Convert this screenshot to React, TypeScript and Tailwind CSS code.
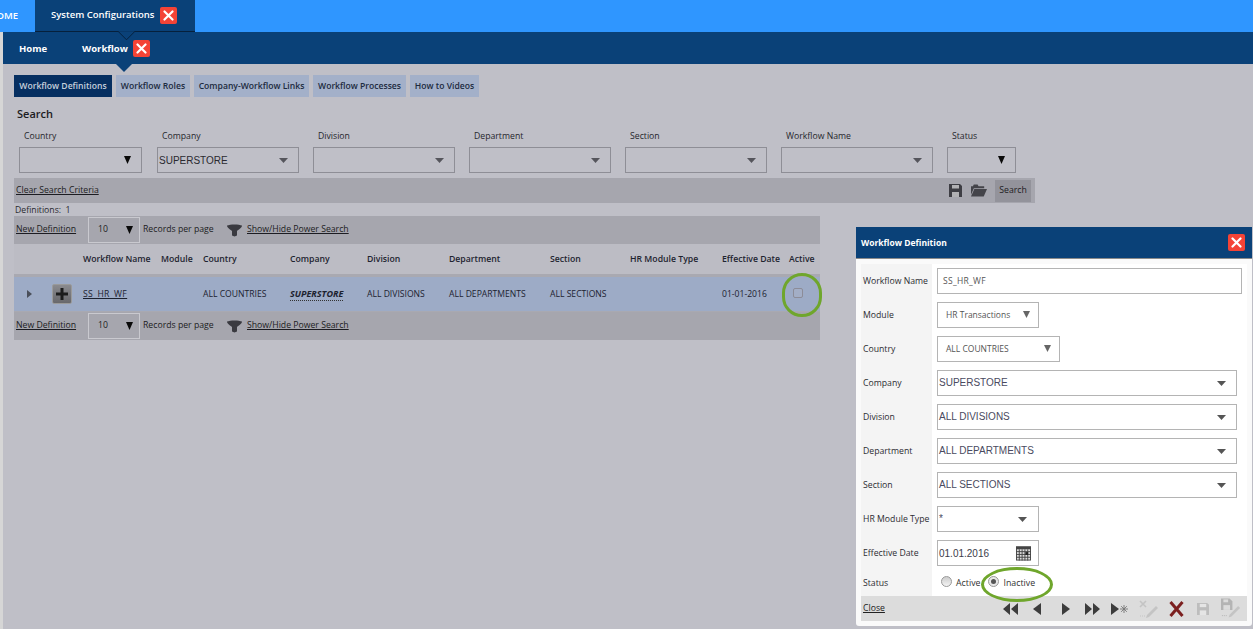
import React from "react";

const font = { fontFamily: '"Open Sans", "DejaVu Sans", sans-serif' };

function CloseX({ className = "" }: { className?: string }) {
  return (
    <span className={"inline-flex w-[17px] h-[17px] bg-[#f44336] rounded-[2px] items-center justify-center " + className}>
      <svg width="11" height="11" viewBox="0 0 11 11"><path d="M1.5 1.5 9.5 9.5M9.5 1.5 1.5 9.5" stroke="#fff" strokeWidth="2.2" strokeLinecap="round" /></svg>
    </span>
  );
}

function Caret({ color = "#55555c", w = 9, h = 5 }: { color?: string; w?: number; h?: number }) {
  return (
    <svg width={w} height={h} viewBox="0 0 11 6" preserveAspectRatio="none"><path d="M0 0H11L5.5 6Z" fill={color} /></svg>
  );
}

function BlackCaret() {
  return <svg width="7" height="8" viewBox="0 0 9 9" preserveAspectRatio="none"><path d="M0 0H9L4.5 9Z" fill="#0a0a0a" /></svg>;
}

function FilterSelect({ w, value, black }: { w: string; value?: string; black?: boolean }) {
  return (
    <div className={"h-[26px] border border-[#8e8e96] flex items-center justify-between pl-[1px] pr-[10px] text-[10px] text-[#2a2a30] " + w} style={{ fontFamily: '"Liberation Sans", sans-serif' }}>
      <span>{value}</span>
      {black ? <BlackCaret /> : <Caret />}
    </div>
  );
}

function Funnel() {
  return (
    <svg width="15" height="13" viewBox="0 0 15 13"><path d="M0 1.5C3 0 12 0 15 1.5C15 4 11 6 10 7V11.5L7.5 12.5L5 11.5V7C4 6 0 4 0 1.5Z" fill="#3a3a40" /></svg>
  );
}

function Pager() {
  return (
    <div className="h-[28px] bg-[#a6a6ae] flex items-center text-[8.7px] text-[#1c1c22]">
      <span className="ml-[2px] underline w-[72px]">New Definition</span>
      <div className="w-[52px] h-[26px] border border-[#c9c9cf] flex items-center justify-between pl-[9px] pr-[6px]">
        <span>10</span>
        <BlackCaret />
      </div>
      <span className="ml-[3px] w-[84px]">Records per page</span>
      <Funnel />
      <span className="ml-[5px] underline">Show/Hide Power Search</span>
    </div>
  );
}

const cols = "grid grid-cols-[69px_78px_42px_87px_77px_82px_101px_80px_92px_67px_31px] items-center";

function Filter({ label, w, ml, value, black }: { label: string; w: string; ml: string; value?: string; black?: boolean }) {
  return (
    <div className={"flex flex-col " + ml}>
      <span className="text-[8.7px] h-[22px] leading-[22px] text-[#26262c] ml-[5px]">{label}</span>
      <FilterSelect w={w} value={value} black={black} />
    </div>
  );
}

function Label({ children }: { children: React.ReactNode }) {
  return <div className="h-[34px] flex items-center pl-[2px] pt-[2px] text-[8.7px] text-[#2c2c32] whitespace-nowrap">{children}</div>;
}

function Row({ children }: { children: React.ReactNode }) {
  return <div className="h-[34px] flex items-center">{children}</div>;
}

function MSelect({ w, value, small, pr = "pr-[10px]", boxPl = "pl-[1px]" }: { w: string; value: string; small?: boolean; pr?: string; boxPl?: string }) {
  return (
    <div
      className={"h-[26px] border border-[#b4b4b4] flex items-center justify-between " + boxPl + " " + pr + " " + w + (small ? " text-[8.5px] text-[#555]" : " text-[10px] text-[#4a4a60]")}
      style={small ? undefined : { fontFamily: '"Liberation Sans", sans-serif' }}
    >
      <span className={small ? "mt-[1px]" : "-mt-[2px]"}>{value}</span>
      {small ? <svg className="-mt-[2px]" width="7" height="7" viewBox="0 0 7 8" preserveAspectRatio="none"><path d="M0 0H7L3.5 8Z" fill="#666" /></svg> : <Caret color="#555" />}
    </div>
  );
}

function Calendar() {
  return (
    <svg width="15" height="15" viewBox="0 0 16 15">
      <rect x=".5" y=".5" width="15" height="14" fill="#ddd" stroke="#444" />
      <rect x="0" y="0" width="16" height="3" fill="#444" />
      {[3.5, 6.5, 9.5, 12.5].map((x) => <path key={x} d={`M${x} 3V15`} stroke="#444" />)}
      {[5.5, 8.5, 11.5].map((y) => <path key={y} d={`M0 ${y}H16`} stroke="#444" />)}
      <rect x="10" y="6" width="3" height="3" fill="#222" />
    </svg>
  );
}

function Save({ c = "#444", s = 13 }: { c?: string; s?: number }) {
  return (
    <svg width={s} height={s} viewBox="0 0 13 13">
      <path d="M0 0H11L13 2V13H0Z" fill={c} />
      <rect x="3" y="1" width="7" height="3.5" fill="#fff" opacity=".6" />
      <rect x="3" y="8" width="7" height="5" fill="#fff" opacity=".6" />
    </svg>
  );
}

function Folder() {
  return (
    <svg width="16" height="13" viewBox="0 0 17 13">
      <path d="M0 2H2L3 0H7L8 2H14V4H3L0 11Z" fill="#44444a" />
      <path d="M3.5 5H17L13.5 13H0Z" fill="#44444a" />
    </svg>
  );
}

function Nav({ d, w = 16 }: { d: string; w?: number }) {
  return <svg width={w} height="12" viewBox={`0 0 ${w} 13`} preserveAspectRatio="none"><path d={d} fill="#3c3c3c" /></svg>;
}

export default function App() {
  return (
    <div className="relative w-[1253px] h-[629px] overflow-hidden bg-[#bfbfc7]" style={font}>
      <div className="h-[32px] bg-[#2f96ff] flex">
        <div className="w-[35px] flex items-center justify-end pr-[17px] text-white text-[9.5px] font-semibold overflow-hidden whitespace-nowrap"><span className="shrink-0">HOME</span></div>
        <div className="relative w-[160px] bg-[#0a4178] border-b border-[#06203c] flex items-center pl-[16px] text-white text-[9.5px] font-semibold">
          <span>System Configurations</span>
          <CloseX className="ml-[6px]" />
          <svg className="absolute left-[83px] top-[31px] z-10" width="17" height="9" viewBox="0 0 18 9"><path d="M0 0 9 9 18 0Z" fill="#0a4178" /><path d="M0 0 9 9 18 0" fill="none" stroke="#06203c" /></svg>
        </div>
      </div>

      <div className="flex h-[597px]">
        <div className="w-[3px] bg-[#d6d6d6] shrink-0" />
        <div className="flex-1 min-w-0">
          <div className="relative h-[32px] bg-[#0a4178] flex items-center text-white text-[9.5px] font-bold">
            <span className="ml-[16px] w-[63px] mt-[2px]">Home</span>
            <span className="mt-[2px]">Workflow</span>
            <CloseX className="ml-[5px]" />
            <svg className="absolute left-[113px] top-[32px]" width="16" height="8" viewBox="0 0 16 8"><path d="M0 0H16L8 8Z" fill="#0a4178" /></svg>
          </div>

          <div className="pl-[11px]">
            <div className="flex gap-[4px] mt-[11px] h-[22px] text-[8.6px] font-semibold text-[#1c2a40]">
              <div className="w-[98px] bg-[#062f61] text-[#c5cfdc] flex items-center justify-center">Workflow Definitions</div>
              <div className="w-[74px] bg-[#a3b0c9] flex items-center justify-center">Workflow Roles</div>
              <div className="w-[115px] bg-[#a3b0c9] flex items-center justify-center">Company-Workflow Links</div>
              <div className="w-[93px] bg-[#a3b0c9] flex items-center justify-center">Workflow Processes</div>
              <div className="w-[69px] bg-[#a3b0c9] flex items-center justify-center">How to Videos</div>
            </div>

            <div className="ml-[3px] mt-[9px] h-[16px] leading-[16px] text-[11px] font-semibold text-[#1c1c22]">Search</div>

            <div className="flex ml-[5px] mt-[3px]">
              <Filter label="Country" w="w-[123px]" ml="" black />
              <Filter label="Company" w="w-[142px]" ml="ml-[15px]" value="SUPERSTORE" />
              <Filter label="Division" w="w-[142px]" ml="ml-[14px]" />
              <Filter label="Department" w="w-[142px]" ml="ml-[14px]" />
              <Filter label="Section" w="w-[142px]" ml="ml-[14px]" />
              <Filter label="Workflow Name" w="w-[152px]" ml="ml-[14px]" />
              <Filter label="Status" w="w-[69px]" ml="ml-[14px]" black />
            </div>

            <div className="w-[1021px] h-[25px] mt-[5px] bg-[#a6a6ae] flex items-center text-[8.7px] text-[#1c1c22]">
              <span className="ml-[2px] underline">Clear Search Criteria</span>
              <div className="ml-auto flex items-center mr-[4px]">
                <Save c="#3e3e44" />
                <span className="ml-[9px] flex"><Folder /></span>
                <div className="ml-[8px] w-[36px] h-[22px] bg-[#93939b] flex items-center justify-center">Search</div>
              </div>
            </div>

            <div className="h-[13px] pt-[1px] leading-[13px] ml-[1px] text-[8.7px] text-[#2a2a30]">Definitions:&nbsp; 1</div>

            <div className="w-[806px]">
              <Pager />
              <div className={cols + " h-[30px] pt-[2px] bg-[#bcbcc4] text-[8.7px] font-semibold text-[#1e2430]"}>
                <span />
                <span>Workflow Name</span>
                <span>Module</span>
                <span>Country</span>
                <span>Company</span>
                <span>Division</span>
                <span>Department</span>
                <span>Section</span>
                <span>HR Module Type</span>
                <span>Effective Date</span>
                <span>Active</span>
              </div>
              <div className="h-[3px] bg-[#a9a9b1]" />
              <div className={cols + " h-[34px] bg-[#9dabc6] text-[8.6px] text-[#1c2230]"}>
                <div className="flex items-center">
                  <svg className="ml-[13px]" width="5" height="8" viewBox="0 0 5 8"><path d="M0 0 5 4 0 8Z" fill="#4a4f5a" /></svg>
                  <div className="ml-[20px] w-[20px] h-[20px] rounded-[2px] border border-[#9a9a9a] bg-gradient-to-b from-[#8a8a8e] to-[#68686c] flex items-center justify-center">
                    <svg width="12" height="12" viewBox="0 0 12 12"><path d="M4.5 0H7.5V4.5H12V7.5H7.5V12H4.5V7.5H0V4.5H4.5Z" fill="#1c1c1c" /></svg>
                  </div>
                </div>
                <span className="underline tracking-[0.4px]">SS_HR_WF</span>
                <span />
                <span>ALL COUNTRIES</span>
                <span className="font-bold italic text-[9px] border-b border-dotted border-[#333] justify-self-start">SUPERSTORE</span>
                <span>ALL DIVISIONS</span>
                <span>ALL DEPARTMENTS</span>
                <span>ALL SECTIONS</span>
                <span />
                <span>01-01-2016</span>
                <span className="ml-[4px] -mt-[2px] w-[10px] h-[10px] border border-[#8c8c98] rounded-[2px] bg-[#a3aec6]" />
              </div>
              <div className="h-px bg-[#a9a9b1]" />
              <Pager />
            </div>
          </div>
        </div>
      </div>

      <div className="absolute left-[782px] top-[273px] w-[40px] h-[44px] rounded-full border-[3px] border-[#6fa62c]" />

      <div className="absolute left-[856px] top-[227px] w-[396px] h-[399px] bg-[#fafafa] rounded-b-[3px] flex flex-col">
        <div className="h-[32px] bg-[#0a4178] border-b border-[#8a8a8a] flex items-center justify-between pl-[5px] pr-[7px] text-white text-[8.5px] font-bold">
          <span className="mt-[2px]">Workflow Definition</span>
          <CloseX />
        </div>
        <div className="flex-1 mx-[5px] mt-[5px] flex bg-white overflow-hidden">
          <div className="w-[71px] bg-[#f4f4f4] pt-[0px]">
            {["Workflow Name", "Module", "Country", "Company", "Division", "Department", "Section", "HR Module Type", "Effective Date"].map((l) => (
              <Label key={l}>{l}</Label>
            ))}
            <div className="h-[26px] flex items-center pl-[2px] pt-[2px] text-[8.7px] text-[#2c2c32]">Status</div>
          </div>
          <div className="flex-1 pl-[5px]">
            <Row>
              <div className="w-[305px] h-[26px] border border-[#b4b4b4] flex items-center pl-[5px] text-[8.5px] text-[#555] tracking-[0.3px]"><span className="mt-[1px]">SS_HR_WF</span></div>
            </Row>
            <Row><MSelect w="w-[102px]" value="HR Transactions" small boxPl="pl-[8px]" pr="pr-[8px]" /></Row>
            <Row><MSelect w="w-[123px]" value="ALL COUNTRIES" small boxPl="pl-[8px]" pr="pr-[8px]" /></Row>
            <Row><MSelect w="w-[300px]" value="SUPERSTORE" /></Row>
            <Row><MSelect w="w-[300px]" value="ALL DIVISIONS" /></Row>
            <Row><MSelect w="w-[300px]" value="ALL DEPARTMENTS" /></Row>
            <Row><MSelect w="w-[300px]" value="ALL SECTIONS" /></Row>
            <Row><MSelect w="w-[102px]" value="*" pr="pr-[11px]" /></Row>
            <Row>
              <div className="w-[102px] h-[26px] border border-[#b4b4b4] flex items-center justify-between pl-[1px] pr-[7px] text-[10px] text-[#3c3c4a]" style={{ fontFamily: '"Liberation Sans", sans-serif' }}>
                <span>01.01.2016</span>
                <Calendar />
              </div>
            </Row>
            <div className="h-[26px] flex items-center pl-[4px] text-[8.8px] text-[#333]">
              <span className="w-[11px] h-[11px] rounded-full border border-[#999] bg-gradient-to-b from-[#ccc] to-[#f4f4f4] -mt-[4px]" />
              <span className="ml-[4px] mt-[2px]">Active</span>
              <span className="ml-[8px] w-[11px] h-[11px] rounded-full border border-[#999] bg-[#e8e8e8] flex items-center justify-center -mt-[4px]">
                <span className="w-[5px] h-[5px] rounded-full bg-[#555]" />
              </span>
              <span className="ml-[4px] mt-[2px]">Inactive</span>
            </div>
          </div>
        </div>
        <div className="mx-[5px] mb-[5px] h-[25px] bg-[#dcdcdc] flex items-center pl-[2px] text-[8.7px] text-[#222]">
          <span className="w-[140px]"><span className="underline">Close</span></span>
          <div className="flex items-center">
            <Nav w={16} d="M7 0V13L0 6.5ZM15 0V13L8 6.5Z" />
            <span className="ml-[14px] flex"><Nav w={8} d="M8 0V13L0 6.5Z" /></span>
            <span className="ml-[21px] flex"><Nav w={8} d="M0 0V13L8 6.5Z" /></span>
            <span className="ml-[15px] flex"><Nav w={16} d="M0 0V13L7 6.5ZM8 0V13L15 6.5Z" /></span>
            <span className="ml-[10px] flex items-center">
              <Nav w={9} d="M0 0V13L8 6.5Z" />
              <svg width="8" height="8" viewBox="0 0 9 9"><path d="M4.5 0V9M0 4.5H9M1.3 1.3 7.7 7.7M7.7 1.3 1.3 7.7" stroke="#777" strokeWidth="1" /></svg>
            </span>
            <svg className="ml-[11px]" width="20" height="18" viewBox="0 0 20 18">
              <path d="M1 1 7 7M7 1 1 7" stroke="#c4c4c4" strokeWidth="1.6" />
              <path d="M8 15 17 6 19 8 10 17 7 18Z" fill="#c4c4c4" />
              <path d="M1 16H6" stroke="#c4c4c4" strokeDasharray="1 1" />
            </svg>
            <svg className="ml-[10px]" width="15" height="16" viewBox="0 0 15 16"><path d="M1.5 1 13.5 15M13.5 1 1.5 15" stroke="#7c2020" strokeWidth="3" /></svg>
            <span className="ml-[13px] flex"><Save c="#bdbdbd" s={12} /></span>
            <svg className="ml-[12px] -mt-[1px]" width="20" height="20" viewBox="0 0 21 20">
              <path d="M0 0H9L12 3V12H0Z" fill="#b4b4b4" />
              <rect x="2.5" y="1" width="5" height="3" fill="#dcdcdc" />
              <rect x="2.5" y="7" width="7" height="5" fill="#dcdcdc" />
              <path d="M9 17 18 8 20 10 11 19 8 20Z" fill="#c4c4c4" />
              <path d="M1 18H6" stroke="#b4b4b4" strokeDasharray="1 1" />
            </svg>
          </div>
        </div>
      </div>

      <div className="absolute left-[981px] top-[567px] w-[72px] h-[35px] rounded-[50%] border-[3px] border-[#6fa62c]" />
    </div>
  );
}
